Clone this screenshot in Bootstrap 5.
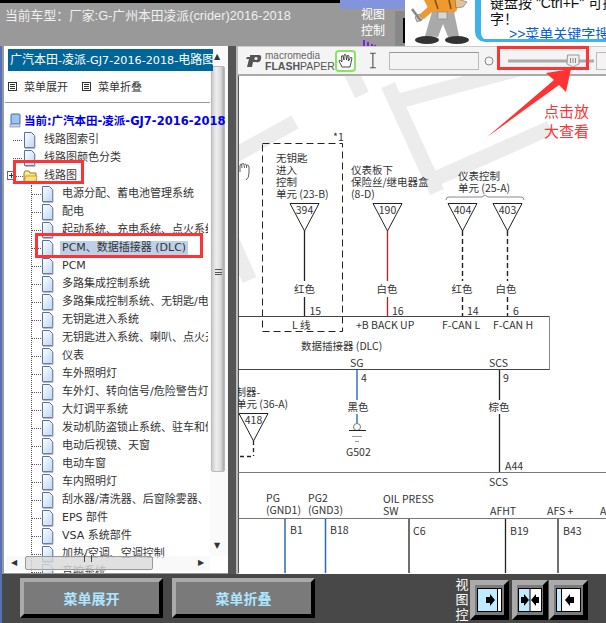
<!DOCTYPE html>
<html lang="zh">
<head>
<meta charset="utf-8">
<title>电路图</title>
<link rel="stylesheet" href="https://cdn.jsdelivr.net/npm/bootstrap@5.3.0/dist/css/bootstrap.min.css">
<style>
html,body{margin:0;height:623px;width:606px;overflow:hidden;background:#484848;font-family:"DejaVu Sans","Noto Sans CJK SC",sans-serif;font-size:12px;color:#333}
.shell{width:606px;height:623px;position:relative;overflow:hidden}
.hdr{height:46px;background:#999}
.hdr-left{width:340px}
.topstrip{height:3px;background:#000}
.car{font-family:"Liberation Sans","Noto Sans CJK SC",sans-serif;font-size:12.8px;color:#f0f0f0;line-height:20px;padding:3px 0 0 5px;white-space:nowrap}
.hdr-view{width:65px;position:relative}
.viewstrip{height:9px;background:#8295dc}
.viewtxt{font-family:"Noto Sans CJK SC",sans-serif;color:#fff;font-size:12px;line-height:16px;padding:0 0 0 21px;margin-top:-3px;position:relative}
.purplebars{position:absolute;left:23px;top:40px}
.slotbox{position:absolute;left:55px;top:11px;width:10px;height:35px;background:#888}
.slotbox::after{content:"";position:absolute;left:8px;top:7px;width:2px;height:25px;background:#000}
.adbox{width:201px;height:46px;background:#fff;overflow:hidden}
.bubble{flex:1;height:46px;margin-top:-4px;border:solid #3fb2ea;border-width:0 0 3px 6px;border-bottom-left-radius:10px;margin-left:5px;padding-left:9px;color:#111;font-family:"Liberation Sans","Noto Sans CJK SC",sans-serif;font-size:14px;line-height:15.5px;white-space:nowrap;overflow:hidden}
.adlink{color:#0a5fd0;text-decoration:none;display:block;margin-left:19px;font-size:14px;border-bottom:2px solid #0a5fd0}
.mainrow{height:528px;background:#999;border-left:2px solid #5870b4}
.panel{width:224px;margin-left:2px;background:#fff;position:relative;overflow:hidden;height:527px}
.ptitle{margin:3px 0 0 4px;width:205px;height:22px;line-height:22px;background:#006699;color:#fff;font-size:11.2px;padding-left:2px;white-space:nowrap;overflow:hidden;position:relative;z-index:2}
.cj{font-size:12px}
.menuline{height:31px;gap:7px;padding:0 0 0 4px;color:#333;font-size:11px;font-family:"Noto Sans CJK SC",sans-serif}
.menuitem{width:67px;gap:7px}
.rule{height:1px;background:#999;margin:0 17px 0 1px}
.current{height:18px;line-height:18px;margin-top:9px;padding-left:5px;font-weight:700;color:#0000ee;white-space:nowrap;font-size:11.5px;gap:3px;position:relative;z-index:2}
.tree,.tree ul{list-style:none;margin:0;padding:0}
.tree{margin-top:1px}
.tree li{height:18px;line-height:18px;white-space:nowrap;display:flex;align-items:center;gap:8px;position:relative;width:204px;overflow:hidden;font-size:11px}
.tree svg{flex:none}
.tree .lv1{padding-left:19px}
.tree ul li{padding-left:37px}
.dots-h{position:absolute;height:1px;border-top:1px dotted #555;top:9px}
.dots-v{position:absolute;width:1px;border-left:1px dotted #555}
.sel{background:#bdd0e8;padding:0 2px;margin-left:-2px;line-height:14px}
.vbar{position:absolute;left:206px;top:0;width:18px;height:510px;background:#fafafa}
.vthumb{position:absolute;left:1px;top:20px;width:14px;height:406px;background:linear-gradient(90deg,#ccc,#eee 35%,#ddd 70%,#aaa);border:1px solid #bbb;border-radius:2px}
.vgrip{position:absolute;left:3px;top:202px;width:7px;height:6px;border-top:1px solid #555;border-bottom:1px solid #555}
.vgrip::after{content:"";display:block;height:1px;background:#555;margin-top:1.5px}
.arrow{position:absolute;font-size:8px;color:#333;line-height:8px}
.hbar{position:absolute;left:2px;top:510px;width:204px;height:15px;background:rgba(245,245,245,.6)}
.hthumb{position:absolute;left:19px;top:0;width:128px;height:14px;background:rgba(200,200,200,.5);border:1px solid #999;border-radius:2px}
.hgrip{position:absolute;left:58px;top:-2px;width:8px;height:7px;border-left:1px solid #444;border-right:1px solid #444}
.divider{width:8px;background:#555}
.gap2{width:2px;background:#bbb}
.docview{flex:1;background:#fff;position:relative;overflow:hidden}
.fptool{height:30px;background:#f4f4f4;border-bottom:2px solid #aaa;border-top:1px solid #ccc;color:#666}
.fp-logo{width:99px;padding-left:8px;gap:2px;font-family:"Liberation Sans",sans-serif;line-height:10px}
.fp-l1{font-size:10px;color:#666}
.fp-l2{font-size:10.5px;font-weight:700;color:#555}
.fp-l2 span{font-weight:400}
.handbtn{width:22px;height:22px;border:2px solid #86e65c;border-radius:4px;background:#fff;margin-right:13px}
.findbox{width:93px;height:18px;background:#f4f4f4;border:1px solid #bbb;border-top-color:#999;margin:0 5px 0 12px}
.rightbox{width:10px;height:18px;margin-left:auto;background:#f4f4f4;border:1px solid #bbb;border-right:0}
.sheet{display:block}
.sheet text{font-family:"Noto Sans CJK SC","Liberation Sans",sans-serif;font-size:10.5px;fill:#333}
.ftr{height:49px;background:#484848;border-left:2px solid #5870b4;padding:4px 0 0 18px}
.bevel{width:143px;height:40px;background:#7a7a7a;border:4px solid;border-color:#aaa #000 #000 #aaa;color:#aee6ff;font-weight:700;font-size:14px;font-family:"Noto Sans CJK SC",sans-serif;margin-right:9px}
.vlabel{width:14px;margin:-2px 0 0 131px;color:#fff;font-size:13px;line-height:15px;font-family:"Noto Sans CJK SC",sans-serif;text-align:center}
.tinybtn{height:40px;background:#7a7a7a;border:5px solid;border-color:#aaa #000 #000 #aaa;margin-top:2px}
.overlay{position:absolute;left:0;top:0;pointer-events:none}
.note{font-family:"Noto Sans CJK SC",sans-serif;fill:#f33;font-size:15px}
</style>
</head>
<body>
<svg width="0" height="0" class="position-absolute">
<defs>
<linearGradient id="pg" x1="0" y1="0" x2="1" y2="1"><stop offset="0" stop-color="#fff"/><stop offset="1" stop-color="#bcd6f5"/></linearGradient>
<linearGradient id="fd" x1="0" y1="0" x2="0" y2="1"><stop offset="0" stop-color="#fff6b8"/><stop offset="1" stop-color="#e6b830"/></linearGradient>
<symbol id="page" viewBox="0 0 13 17"><path d="M1.5.5H8.5L11.5 3.5V15.5H1.5Z" fill="url(#pg)" stroke="#5b6f9e"/><path d="M2 16.3H12V4" fill="none" stroke="#aab" /></symbol>
<symbol id="mnu" viewBox="0 0 9 9"><rect x=".5" y=".5" width="8" height="8" fill="#fff" stroke="#333"/><path d="M2 2.5H7M2 4.5H7M2 6.5H7" stroke="#333"/></symbol>
</defs>
</svg>
<div class="shell d-flex flex-column">
  <header class="hdr d-flex">
    <div class="hdr-left">
      <div class="topstrip"></div>
      <div class="car">当前车型：厂家:G-广州本田凌派(crider)2016-2018</div>
    </div>
    <div class="hdr-view">
      <div class="viewstrip"></div>
      <div class="viewtxt">视图<br>控制</div>
      <svg class="purplebars" width="14" height="6"><path d="M1 0V6M5 2V6M9 4V6M12 5V6" stroke="#7a22e8" stroke-width="2"/></svg>
      <div class="slotbox"></div>
    </div>
    <div class="adbox d-flex">
      <svg width="65" height="46" viewBox="0 0 65 46" class="flex-shrink-0">
        <path d="M18 -2H50L52 10 48 14H28L24 10Z" fill="#ee9a2e"/>
        <path d="M30 0 33 9M44 0 46 9" stroke="#7a4c12" stroke-width="1.500"/>
        <path d="M27 12H49L54 36 43 37 38 24 33 37 20 36Z" fill="#a9a9a9"/>
        <rect x="33" y="12" width="9" height="7" fill="#d6d6d6" stroke="#777" stroke-width=".5"/>
        <path d="M24 6 14 15 19 19 28 11Z" fill="#ee9a2e"/>
        <path d="M14 14 10 17 12 22 18 19Z" fill="#e3c398" stroke="#555" stroke-width=".5"/>
        <path d="M7 9 16 21" stroke="#888" stroke-width="2.500"/>
        <path d="M50 -2 62 2 58 7 51 8Z" fill="#e3c398" stroke="#555" stroke-width=".5"/>
        <ellipse cx="22" cy="40" rx="12" ry="4" fill="#333"/>
        <ellipse cx="52" cy="40" rx="12" ry="4" fill="#333"/>
      </svg>
      <div class="bubble">键盘按 "Ctrl+F" 可搜索<br>字！<a class="adlink" href="#">&gt;&gt;菜单关键字搜索</a></div>
    </div>
  </header>

  <div class="mainrow d-flex">
    <aside class="panel">
      <div class="ptitle"><span class="cj">广汽本田</span>-<span class="cj">凌派</span>-GJ7-2016-2018-<span class="cj">电路图</span></div>
      <div class="menuline d-flex align-items-center">
        <div class="menuitem d-flex align-items-center"><svg width="9" height="9"><use href="#mnu"/></svg>菜单展开</div>
        <div class="menuitem d-flex align-items-center"><svg width="9" height="9"><use href="#mnu"/></svg>菜单折叠</div>
      </div>
      <div class="rule"></div>
      <div class="current d-flex align-items-center">
        <svg width="12" height="17" viewBox="0 0 12 17" class="flex-shrink-0"><rect x="2" y="1" width="9" height="10" rx="1" fill="#9cc4f0" stroke="#4a6a9a"/><rect x="1" y="11" width="10" height="3" fill="#c6d6ea" stroke="#6a7a9a" stroke-width=".6"/></svg>
        <span>当前:广汽本田-凌派-GJ7-2016-2018</span>
      </div>
      <ul class="tree">
        <li class="lv1"><i class="dots-h" style="left:9px;width:9px"></i><svg width="13" height="17"><use href="#page"/></svg>线路图索引</li>
        <li class="lv1"><i class="dots-h" style="left:9px;width:9px"></i><svg width="13" height="17"><use href="#page"/></svg>线路图颜色分类</li>
        <li class="lv1"><svg class="position-absolute" style="left:3px;top:4px" width="9" height="9"><rect x=".5" y=".5" width="8" height="8" fill="#fff" stroke="#666"/><path d="M2 4.5H7M4.5 2V7" stroke="#333"/></svg><i class="dots-h" style="left:12px;width:7px"></i>
          <svg class="me-0" width="15" height="13" viewBox="0 0 15 13"><path d="M1 3 2 1H6L7 3H13V12H1Z" fill="url(#fd)" stroke="#9a7a20"/><path d="M1 12 3 6H14L13 12Z" fill="#fbe27a" stroke="#a88420" stroke-width=".6"/></svg><span style="margin-left:-2px">线路图</span></li>
        <li class="p-0" style="height:auto;width:204px;display:block;overflow:visible">
          <i class="dots-v" style="left:27px;top:0;height:400px"></i>
          <ul>
            <li><i class="dots-h" style="left:28px;width:9px"></i><svg width="13" height="17"><use href="#page"/></svg>电源分配、蓄电池管理系统</li>
            <li><i class="dots-h" style="left:28px;width:9px"></i><svg width="13" height="17"><use href="#page"/></svg>配电</li>
            <li><i class="dots-h" style="left:28px;width:9px"></i><svg width="13" height="17"><use href="#page"/></svg>起动系统、充电系统、点火系统</li>
            <li><i class="dots-h" style="left:28px;width:9px"></i><svg width="13" height="17"><use href="#page"/></svg><span class="sel">PCM、数据插接器 (DLC)</span></li>
            <li><i class="dots-h" style="left:28px;width:9px"></i><svg width="13" height="17"><use href="#page"/></svg>PCM</li>
            <li><i class="dots-h" style="left:28px;width:9px"></i><svg width="13" height="17"><use href="#page"/></svg>多路集成控制系统</li>
            <li><i class="dots-h" style="left:28px;width:9px"></i><svg width="13" height="17"><use href="#page"/></svg>多路集成控制系统、无钥匙/电动</li>
            <li><i class="dots-h" style="left:28px;width:9px"></i><svg width="13" height="17"><use href="#page"/></svg>无钥匙进入系统</li>
            <li><i class="dots-h" style="left:28px;width:9px"></i><svg width="13" height="17"><use href="#page"/></svg>无钥匙进入系统、喇叭、点火开关</li>
            <li><i class="dots-h" style="left:28px;width:9px"></i><svg width="13" height="17"><use href="#page"/></svg>仪表</li>
            <li><i class="dots-h" style="left:28px;width:9px"></i><svg width="13" height="17"><use href="#page"/></svg>车外照明灯</li>
            <li><i class="dots-h" style="left:28px;width:9px"></i><svg width="13" height="17"><use href="#page"/></svg>车外灯、转向信号/危险警告灯</li>
            <li><i class="dots-h" style="left:28px;width:9px"></i><svg width="13" height="17"><use href="#page"/></svg>大灯调平系统</li>
            <li><i class="dots-h" style="left:28px;width:9px"></i><svg width="13" height="17"><use href="#page"/></svg>发动机防盗锁止系统、驻车和倒车</li>
            <li><i class="dots-h" style="left:28px;width:9px"></i><svg width="13" height="17"><use href="#page"/></svg>电动后视镜、天窗</li>
            <li><i class="dots-h" style="left:28px;width:9px"></i><svg width="13" height="17"><use href="#page"/></svg>电动车窗</li>
            <li><i class="dots-h" style="left:28px;width:9px"></i><svg width="13" height="17"><use href="#page"/></svg>车内照明灯</li>
            <li><i class="dots-h" style="left:28px;width:9px"></i><svg width="13" height="17"><use href="#page"/></svg>刮水器/清洗器、后窗除雾器、</li>
            <li><i class="dots-h" style="left:28px;width:9px"></i><svg width="13" height="17"><use href="#page"/></svg>EPS 部件</li>
            <li><i class="dots-h" style="left:28px;width:9px"></i><svg width="13" height="17"><use href="#page"/></svg>VSA 系统部件</li>
            <li><i class="dots-h" style="left:28px;width:9px"></i><svg width="13" height="17"><use href="#page"/></svg>加热/空调、空调控制</li>
            <li><i class="dots-h" style="left:28px;width:9px"></i><svg width="13" height="17"><use href="#page"/></svg>音响系统</li>
          </ul>
        </li>
      </ul>
      <div class="vbar">
        <span class="arrow" style="left:4px;top:7px">▲</span>
        <div class="vthumb"><div class="vgrip"></div></div>
        <span class="arrow" style="left:4px;top:496px">▼</span>
      </div>
      <div class="hbar">
        <span class="arrow" style="left:5px;top:3px">◀</span>
        <div class="hthumb"><div class="hgrip"></div></div>
        <span class="arrow" style="left:192px;top:3px">▶</span>
      </div>
    </aside>
    <div class="divider"></div>
    <div class="gap2"></div>
    <section class="docview">
      <div class="fptool d-flex align-items-center">
        <div class="fp-logo d-flex align-items-center">
          <svg width="17" height="14" viewBox="0 0 17 14"><path d="M4 1H13Q16 1 15 5T10 8H7L6 13H1L3 5H0L1 3H4Z" fill="#555"/><circle cx="10" cy="4.5" r="1.6" fill="#f4f4f4"/></svg>
          <div><div class="fp-l1">macromedia</div><div class="fp-l2">FLASH<span>PAPER</span></div></div>
        </div>
        <div class="handbtn d-flex align-items-center justify-content-center">
          <svg width="16" height="16" viewBox="0 0 16 16"><path d="M4 14 1 8Q1 7 2.500 7.500L4 9 3.500 3Q4 2 5 3L6 7 6 2Q7 1 8 2L8.500 7 9.500 2.500Q10.500 2 11 3L10.500 8 12.500 4.500Q13.500 4 14 5L12 14Z" fill="#fff" stroke="#333" stroke-width=".9"/></svg>
        </div>
        <svg width="8" height="17" viewBox="0 0 8 17"><path d="M1 1H7M4 1V16M1 16H7" stroke="#555" fill="none" stroke-width="1.2"/></svg>
        <div class="findbox"></div>
        <svg width="112" height="18" viewBox="0 0 112 18" class="flex-shrink-0"><circle cx="5" cy="9" r="4" fill="none" stroke="#888"/><path d="M24 9H110" stroke="#aaa" stroke-width="3"/><path d="M83.500 3H95V12L89 15 83 12Z" fill="#eee" stroke="#999"/><path d="M86.500 6V11M89 6V11M91.500 6V11" stroke="#888"/></svg>
        <div class="rightbox"></div>
      </div>
      <svg class="sheet" width="368" height="497" viewBox="238 76 368 497">
        <g fill="none" stroke="#ececec" stroke-width="15">
          <path d="M388 85 437 192"/>
          <path d="M395 102 530 66"/>
          <path d="M437 178 550 128"/>
          <path d="M350 70 362 95"/>
          <path d="M230 158 295 122"/>
          <path d="M216 205 249.600 280"/>
        </g>
        <g id="wires" fill="none" stroke="#222">
          <path d="M238.500 76V573" stroke="#555"/>
          <rect x="262.500" y="143.500" width="80" height="188" stroke-dasharray="7 4"/>
          <path d="M238 316.500H549.500V369.500H238" stroke="#444"/>
          <path d="M549.500 316V369.500" stroke="#888"/>
          <path d="M290 203.500H319L304.500 231Z"/><path d="M373 203.500H402L387.500 231Z"/>
          <path d="M448 203.500H477L462.500 231Z"/><path d="M493 203.500H522L507.500 231Z"/>
          <path d="M239 413.500H268L253.500 441Z"/>
          <path d="M446 200Q446 197 449 197H482L485 195 488 197H521Q524 197 524 200" stroke="#888"/>
          <path d="M304.500 231V281M304.500 297V316" stroke-width="1.300"/>
          <path d="M387.500 231V281M387.500 297V316" stroke="#d8141c" stroke-width="1.300"/>
          <path d="M462.500 231V281M462.500 297V316M507.500 231V281M507.500 297V316" stroke-width="1.400" stroke-dasharray="5 3"/>
          <path d="M357 370V400M357 414V423" stroke="#2a6cb0" stroke-width="1.400"/>
          <circle cx="357" cy="427" r="3.500" stroke="#777"/>
          <path d="M349 430.500H366"/><path d="M352 436.500H362M355 441.500H359" stroke="#999"/>
          <path d="M499.500 370V400M499.500 414V472" stroke-width="1.300"/>
          <path d="M253.500 441V456M240 456.500H253" stroke-dasharray="4 3" stroke-width="1.300"/>
          <path d="M238 472.500H606M238 518.500H606" stroke="#777"/>
          <path d="M285 519V573M325.500 519V573" stroke="#2a6cb0" stroke-width="1.500"/>
          <path d="M409 519V573M505.500 519V573M558 519V573" stroke-width="1.300"/>
        </g>
        <path d="M240 172 V166Q240 164 241.500 164L242 168M242 164Q243 163 244 164L244.500 168M245 164Q246 164 246.500 165L246.500 168M247 165Q249 165 249 167V173Q249 178 246 180" fill="none" stroke="#333" stroke-width=".8"/>
        <g>
          <text x="333" y="141">*1</text>
          <text x="276" y="162">无钥匙</text><text x="276" y="174">进入</text><text x="276" y="186">控制</text><text x="276" y="198">单元 (23-B)</text>
          <text x="351" y="174">仪表板下</text><text x="351" y="186">保险丝/继电器盒</text><text x="351" y="198">(8-D)</text>
          <text x="458" y="180">仪表控制</text><text x="458" y="192">单元 (25-A)</text>
          <text x="304.500" y="214" text-anchor="middle">394</text><text x="387.500" y="214" text-anchor="middle">190</text>
          <text x="462.500" y="214" text-anchor="middle">404</text><text x="507.500" y="214" text-anchor="middle">403</text>
          <text x="253.500" y="424" text-anchor="middle">418</text>
          <text x="304.500" y="293" text-anchor="middle">红色</text><text x="387" y="293" text-anchor="middle">白色</text>
          <text x="462" y="293" text-anchor="middle">红色</text><text x="506" y="293" text-anchor="middle">白色</text>
          <text x="309.500" y="315">15</text><text x="392" y="315">16</text><text x="467" y="315">14</text><text x="513" y="315">6</text>
          <text x="292" y="329">L 线</text><text x="356" y="329">+B BACK UP</text><text x="442" y="329">F-CAN L</text><text x="493" y="329">F-CAN H</text>
          <text x="301" y="350">数据插接器 (DLC)</text>
          <text x="350" y="367">SG</text><text x="489" y="367">SCS</text>
          <text x="361" y="382">4</text><text x="503" y="382">9</text>
          <text x="358" y="411" text-anchor="middle">黑色</text><text x="499" y="411" text-anchor="middle">棕色</text>
          <text x="225" y="396">控制器-</text><text x="236" y="408">单元 (36-A)</text>
          <text x="346" y="456">G502</text><text x="505" y="470">A44</text><text x="489" y="486">SCS</text>
          <text x="266" y="502">PG</text><text x="266" y="514">(GND1)</text><text x="308" y="502">PG2</text><text x="308" y="514">(GND3)</text>
          <text x="383" y="503">OIL PRESS</text><text x="383" y="515">SW</text><text x="490" y="515">AFHT</text><text x="547" y="515">AFS +</text><text x="600" y="515">A</text>
          <text x="290" y="534">B1</text><text x="330" y="534">B18</text><text x="413" y="535">C6</text><text x="510" y="535">B19</text><text x="563" y="535">B43</text>
        </g>
      </svg>
    </section>
  </div>

  <footer class="ftr d-flex align-items-start">
    <button type="button" class="bevel d-flex align-items-center justify-content-center p-0">菜单展开</button>
    <button type="button" class="bevel d-flex align-items-center justify-content-center p-0">菜单折叠</button>
    <div class="vlabel">视<br>图<br>控</div>
    <div class="tinybtn" style="margin-left:1px"><svg class="d-block" width="29" height="30" viewBox="0 0 29 30"><rect x="2.500" y="3.500" width="24" height="23" fill="#bfeaff" stroke="#000"/><rect x="22" y="4" width="4" height="22" fill="#fff"/><path d="M22.500 4V26" stroke="#000"/><path d="M11 12H15V9L20 15 15 21V18H11Z"/></svg></div>
    <div class="tinybtn" style="margin-left:3px"><svg class="d-block" width="26" height="30" viewBox="0 0 26 30"><rect x="1.500" y="3.500" width="23" height="23" fill="#fff" stroke="#000"/><rect x="2" y="4" width="11" height="22" fill="#bfeaff"/><path d="M13 4V26" stroke="#000"/><path d="M4 12H7V9L12 15 7 21V18H4ZM22 12H19V9L14 15 19 21V18H22Z"/></svg></div>
    <div class="tinybtn" style="margin-left:1px"><svg class="d-block" width="29" height="30" viewBox="0 0 29 30"><rect x="2.500" y="3.500" width="24" height="23" fill="#fff" stroke="#000"/><path d="M7.500 4V26" stroke="#000"/><rect x="3" y="4" width="4" height="22" fill="#bfeaff"/><path d="M20 12H16V9L11 15 16 21V18H20Z"/></svg></div>
  </footer>

  <svg class="overlay" width="606" height="623" viewBox="0 0 606 623">
    <g fill="none" stroke="#f33" stroke-width="3">
      <rect x="14.500" y="161.500" width="68" height="21"/>
      <rect x="36.500" y="234.500" width="165" height="22"/>
      <rect x="498.500" y="47.500" width="89" height="21"/>
    </g>
    <polygon points="487,137 554,80 546,73 571,69 566,92 559,85" fill="#f33"/>
    <text class="note" x="544" y="117">点击放</text>
    <text class="note" x="544" y="137">大查看</text>
  </svg>
</div>
<script src="https://cdn.jsdelivr.net/npm/bootstrap@5.3.0/dist/js/bootstrap.bundle.min.js"></script>
</body>
</html>
